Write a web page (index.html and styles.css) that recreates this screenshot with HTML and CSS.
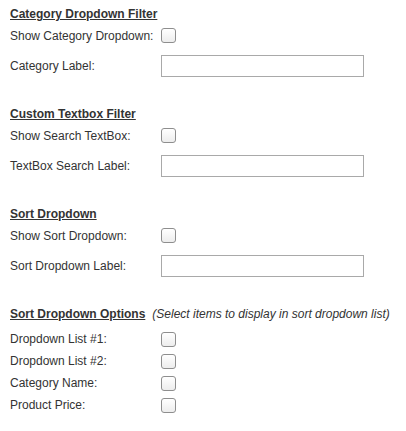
FILE: index.html
```html
<!DOCTYPE html>
<html lang="en">
<head>
    <meta charset="UTF-8">
    <meta name="viewport" content="width=device-width, initial-scale=1.0">
    <title>Filter Settings</title>
    <link rel="stylesheet" href="styles.css">
</head>
<body>
    <div class="settings">
        <div class="section">
            <h3 class="heading"><span class="title">Category Dropdown Filter</span></h3>
            <div class="row">
                <label for="showCategory">Show Category Dropdown:</label>
                <input type="checkbox" id="showCategory">
            </div>
            <div class="row field">
                <label for="categoryLabel">Category Label:</label>
                <input type="text" id="categoryLabel">
            </div>
        </div>

        <div class="section">
            <h3 class="heading"><span class="title">Custom Textbox Filter</span></h3>
            <div class="row">
                <label for="showSearch">Show Search TextBox:</label>
                <input type="checkbox" id="showSearch">
            </div>
            <div class="row field">
                <label for="searchLabel">TextBox Search Label:</label>
                <input type="text" id="searchLabel">
            </div>
        </div>

        <div class="section">
            <h3 class="heading"><span class="title">Sort Dropdown</span></h3>
            <div class="row">
                <label for="showSort">Show Sort Dropdown:</label>
                <input type="checkbox" id="showSort">
            </div>
            <div class="row field">
                <label for="sortLabel">Sort Dropdown Label:</label>
                <input type="text" id="sortLabel">
            </div>
        </div>

        <div class="section options">
            <h3 class="heading"><span class="title">Sort Dropdown Options</span><span class="note">(Select items to display in sort dropdown list)</span></h3>
            <div class="row">
                <label for="list1">Dropdown List #1:</label>
                <input type="checkbox" id="list1">
            </div>
            <div class="row">
                <label for="list2">Dropdown List #2:</label>
                <input type="checkbox" id="list2">
            </div>
            <div class="row">
                <label for="catName">Category Name:</label>
                <input type="checkbox" id="catName">
            </div>
            <div class="row">
                <label for="price">Product Price:</label>
                <input type="checkbox" id="price">
            </div>
        </div>
    </div>
</body>
</html>
```

FILE: styles.css
```css
body {
    font-family: "Liberation Sans", Arial, sans-serif;
    font-size: 12px;
    margin: 0;
    padding: 0;
    background: #ffffff;
    color: #333;
}
.settings {
    padding: 7px 10px 0 10px;
}
.section {
    margin-bottom: 30px;
}
.section:last-child {
    margin-bottom: 0;
}
.heading {
    margin: 0 0 4px 0;
    font-size: 12px;
    line-height: 14px;
    font-weight: bold;
}
.heading .title {
    text-decoration: underline;
}
.heading .note {
    margin-left: 7px;
    font-weight: normal;
    font-style: italic;
}
.row {
    display: flex;
    align-items: center;
    height: 21px;
}
.row label {
    width: 151px;
    flex-shrink: 0;
}
.row.field {
    height: 22px;
    margin-top: 9px;
}
.options .heading {
    margin-bottom: 7px;
}
.options .row {
    height: 22px;
}
input[type="checkbox"] {
    appearance: none;
    -webkit-appearance: none;
    width: 15px;
    height: 15px;
    margin: 0;
    border: 1px solid #8e8e8e;
    border-radius: 3px;
    background: linear-gradient(to bottom, #ffffff, #ededed);
}
input[type="text"] {
    box-sizing: border-box;
    width: 203px;
    height: 22px;
    margin: 0;
    padding: 2px 4px;
    border: 1px solid #a9a9a9;
    font-family: inherit;
    font-size: 12px;
}
```
